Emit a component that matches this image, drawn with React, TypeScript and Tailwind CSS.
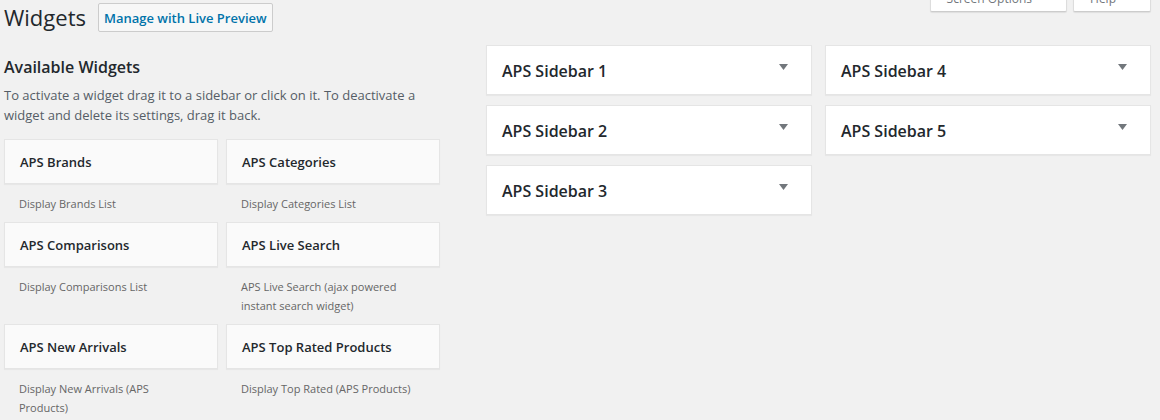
const widgets = [
  { name: "APS Brands", text: "Display Brands List" },
  { name: "APS Categories", text: "Display Categories List" },
  { name: "APS Comparisons", text: "Display Comparisons List" },
  { name: "APS Live Search", text: "APS Live Search (ajax powered instant search widget)" },
  { name: "APS New Arrivals", text: "Display New Arrivals (APS Products)" },
  { name: "APS Top Rated Products", text: "Display Top Rated (APS Products)" },
];

const sidebarColumns = [
  ["APS Sidebar 1", "APS Sidebar 2", "APS Sidebar 3"],
  ["APS Sidebar 4", "APS Sidebar 5"],
];

function ScreenTab({ label }: { label: string }) {
  return (
    <button
      type="button"
      className="flex h-[30px] items-center rounded-b-xs border border-t-0 border-[#ddd] border-b-[#ccc] bg-white pt-[5px] pr-[34px] pl-4 text-[12px] text-[#72777c] shadow-[0_1px_1px_rgba(0,0,0,0.08)]"
    >
      {label}
    </button>
  );
}

function WidgetCard({ name, text }: { name: string; text: string }) {
  return (
    <li>
      <h3 className="flex h-[45px] items-center border border-[#e5e5e5] bg-[#fafafa] px-[15px] pt-[2px] text-[13px] font-semibold text-[#23282d] shadow-[0_1px_1px_rgba(0,0,0,0.04)]">
        {name}
      </h3>
      <p className="pt-[10px] pr-[25px] pb-[9px] pl-[15px] text-[11px] leading-[19px] text-[#666]">{text}</p>
    </li>
  );
}

function SidebarPanel({ name }: { name: string }) {
  return (
    <button
      type="button"
      className="flex h-[50px] w-full items-center justify-between border border-[#e5e5e5] bg-white pt-[2px] pr-[23px] pl-[15px] text-left shadow-[0_1px_1px_rgba(0,0,0,0.04)]"
    >
      <span className="text-[16px] font-semibold text-[#23282d]">{name}</span>
      <svg viewBox="0 0 9 6" className="mb-2 h-[6px] w-[9px] fill-[#72777c]" aria-hidden="true">
        <path d="M0 0h9L4.500 6z" />
      </svg>
    </button>
  );
}

export default function App() {
  return (
    <div className="min-h-screen overflow-hidden bg-[#f1f1f1] pr-[9px] pl-1 font-['Open_Sans','Noto_Sans',sans-serif] text-[#444]">
      <header className="flex h-[45px] items-start justify-between">
        <div className="flex items-center gap-3 pt-[3px]">
          <h1 className="text-[22px] leading-[29px] text-[#23282d]">Widgets</h1>
          <a
            href="#preview"
            className="rounded-[2px] border border-[#ccc] bg-[#f7f7f7] px-[5px] pt-px text-[13px] leading-[26px] font-semibold text-[#0073aa]"
          >
            Manage with Live Preview
          </a>
        </div>
        <div className="-mt-[18px] flex gap-[6px]">
          <ScreenTab label="Screen Options" />
          <ScreenTab label="Help" />
        </div>
      </header>
      <main className="grid grid-cols-[436fr_665fr] items-start gap-[46px]">
        <section>
          <h2 className="pt-[10px] text-[16px] leading-6 font-semibold text-[#23282d]">Available Widgets</h2>
          <p className="pt-[6px] pb-[14px] text-[13px] leading-5 text-[#555d66]">
            To activate a widget drag it to a sidebar or click on it. To deactivate a widget and delete its settings,
            drag it back.
          </p>
          <ul className="grid grid-cols-2 gap-x-2">
            {widgets.map((w) => (
              <WidgetCard key={w.name} name={w.name} text={w.text} />
            ))}
          </ul>
        </section>
        <section className="grid grid-cols-2 items-start gap-[13px]">
          {sidebarColumns.map((column) => (
            <div key={column[0]} className="flex flex-col gap-[10px]">
              {column.map((name) => (
                <SidebarPanel key={name} name={name} />
              ))}
            </div>
          ))}
        </section>
      </main>
    </div>
  );
}
